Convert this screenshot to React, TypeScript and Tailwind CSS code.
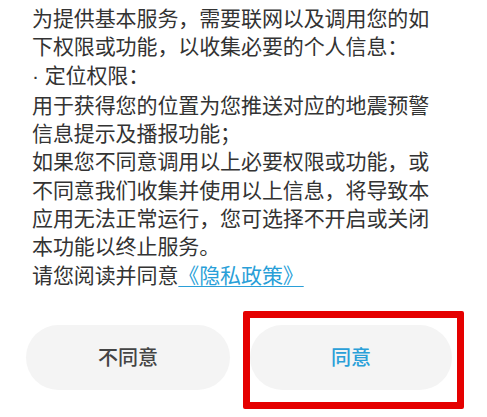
import React from 'react';

const lines = [
  '为提供基本服务，需要联网以及调用您的如',
  '下权限或功能，以收集必要的个人信息：',
];

const lines2 = [
  '用于获得您的位置为您推送对应的地震预警',
  '信息提示及播报功能；',
  '如果您不同意调用以上必要权限或功能，或',
  '不同意我们收集并使用以上信息，将导致本',
  '应用无法正常运行，您可选择不开启或关闭',
  '本功能以终止服务。',
];

const App: React.FC = () => {
  return (
    <div
      className="w-[487px] h-[417px] bg-white overflow-hidden"
      style={{ fontFamily: '"Noto Sans CJK SC", "Noto Sans", sans-serif' }}
    >
      {/* Body text */}
      <div className="pl-[32px] pt-[3px] text-[21px] leading-[28.3px] text-[#333333] whitespace-nowrap tracking-[-0.1px]">
        {lines.map((line) => (
          <div key={line}>{line}</div>
        ))}
        <div>
          <span style={{ fontFamily: '"Liberation Sans", sans-serif' }}>· </span>
          定位权限：
        </div>
        {lines2.map((line) => (
          <div key={line}>{line}</div>
        ))}
        <div>
          请您阅读并同意
          <span className="text-[#2a9fd8] underline underline-offset-[3px] decoration-[1px]">《隐私政策》</span>
        </div>
      </div>

      {/* Actions */}
      <div className="flex gap-[20px] pl-[26px] pt-[37px]">
        <button className="w-[204px] h-[65px] rounded-full bg-[#f4f4f4] text-[20px] font-medium text-[#444444]">
          不同意
        </button>
        <div className="relative">
          <button className="w-[202px] h-[65px] rounded-full bg-[#f4f4f4] text-[20px] font-medium text-[#2a9fd8]">
            同意
          </button>
          {/* red highlight box */}
          <div className="absolute left-[-7px] top-[-14px] w-[221px] h-[98px] border-[7px] border-[#e50000] rounded-[2px] pointer-events-none" />
        </div>
      </div>
    </div>
  );
};

export default App;
